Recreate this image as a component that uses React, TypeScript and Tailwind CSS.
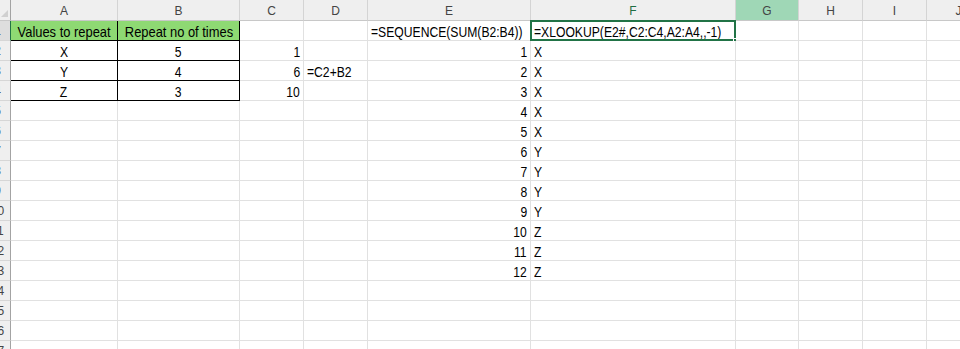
import React from "react";

type Align = "left" | "center" | "right";
type Cell = { text?: string; align?: Align; fill?: boolean; box?: boolean };

const columns = [
  { key: "A", width: "w-[107px]" },
  { key: "B", width: "w-[122px]" },
  { key: "C", width: "w-[64px]" },
  { key: "D", width: "w-[64px]" },
  { key: "E", width: "w-[163px]" },
  { key: "F", width: "w-[205px]" },
  { key: "G", width: "w-[63px]" },
  { key: "H", width: "w-[64px]" },
  { key: "I", width: "w-[64px]" },
  { key: "J", width: "w-[64px]" },
];

const font = "font-['Liberation_Sans',Arial,sans-serif]";

// sheet contents, keyed by row then column
const sheet: Record<number, Record<string, Cell>> = {
  1: {
    A: { text: "Values to repeat", align: "center", fill: true, box: true },
    B: { text: "Repeat no of times", align: "center", fill: true, box: true },
    E: { text: "=SEQUENCE(SUM(B2:B4))", align: "left" },
    F: { text: "=XLOOKUP(E2#,C2:C4,A2:A4,,-1)", align: "left" },
  },
  2: {
    A: { text: "X", align: "center", box: true },
    B: { text: "5", align: "center", box: true },
    C: { text: "1", align: "right" },
  },
  3: {
    A: { text: "Y", align: "center", box: true },
    B: { text: "4", align: "center", box: true },
    C: { text: "6", align: "right" },
    D: { text: "=C2+B2", align: "left" },
  },
  4: {
    A: { text: "Z", align: "center", box: true },
    B: { text: "3", align: "center", box: true },
    C: { text: "10", align: "right" },
  },
};

const spill = ["X", "X", "X", "X", "X", "Y", "Y", "Y", "Y", "Z", "Z", "Z"];
spill.forEach((letter, i) => {
  const row = i + 2;
  sheet[row] = sheet[row] || {};
  sheet[row].E = { text: String(i + 1), align: "right" };
  sheet[row].F = { text: letter, align: "left" };
});

const rows = Array.from({ length: 17 }, (_, i) => i + 1);

const alignClass = (align?: Align) =>
  align === "center"
    ? "justify-center"
    : align === "right"
      ? "justify-end pr-[3px]"
      : "justify-start pl-[3px]";

// no narrow font installed, so squeeze Liberation Sans to the width of Aptos Narrow
const squeezeClass = (cell: Cell) => {
  const origin =
    cell.align === "center" ? "origin-center" : cell.align === "right" ? "origin-right" : "origin-left";
  return `${origin} ${cell.fill ? "scale-x-[0.86]" : "scale-x-[0.81]"}`;
};

const ColumnHeader = ({ label, width }: { label: string; width: string }) => {
  const bg = label === "G" ? "bg-[#9fd7b6]" : "bg-[#efefef]";
  const color = label === "F" ? "text-[#1f6e43]" : "text-[#444444]";
  return (
    <div
      className={`${width} ${bg} ${color} shrink-0 h-[21px] flex justify-center pt-[1px] leading-[20px] text-[12px] border-r border-b border-r-[#d4d4d4] border-b-[#c8c8c8]`}
    >
      {label}
    </div>
  );
};

const RowHeader = ({ n }: { n: number }) => (
  <div
    className={`w-[11px] shrink-0 h-[20px] overflow-hidden border-b border-b-[#d6d6d6] border-r ${
      n === 1 ? "bg-[#dedede] border-r-[#217346]" : "bg-[#efefef] border-r-[#a3a3a3]"
    }`}
  >
    <div className="w-[25px] ml-[-15px] text-center text-[12px] leading-[20px] text-[#444444]">
      {n}
    </div>
  </div>
);

const SheetCell = ({ row, col, width }: { row: number; col: string; width: string }) => {
  const cell = sheet[row]?.[col];
  const border = cell?.box
    ? "border-r border-b border-black"
    : "border-r border-b border-[#e1e1e1]";
  const bg = cell?.fill ? "bg-[#8ed973]" : "bg-white";
  const selected = row === 1 && col === "F";
  return (
    <div
      className={`${width} ${border} ${bg} ${alignClass(cell?.align)} relative shrink-0 h-[20px] flex items-start pt-[3px] text-[15px] leading-[15px] text-black whitespace-nowrap`}
    >
      {cell?.text && (
        <span className={`inline-block shrink-0 ${squeezeClass(cell)}`}>{cell.text}</span>
      )}
      {selected && (
        <>
          <div className="absolute -left-[1px] -top-[1px] -right-[1px] -bottom-[1px] border-2 border-[#217346]" />
          <div className="absolute -right-[4px] -bottom-[4px] w-[6px] h-[6px] bg-[#217346] border border-white" />
        </>
      )}
    </div>
  );
};

export default function App() {
  return (
    <div className={`w-[960px] h-[349px] overflow-hidden bg-white ${font}`}>
      <div className="flex">
        <div className="w-[11px] shrink-0 h-[21px] bg-[#efefef] border-r border-b border-r-[#a3a3a3] border-b-[#c8c8c8] relative">
          <div className="absolute right-[2px] bottom-[3px] w-0 h-0 border-l-[7px] border-l-transparent border-b-[7px] border-b-[#d0d0d0]" />
        </div>
        {columns.map((c) => (
          <ColumnHeader key={c.key} label={c.key} width={c.width} />
        ))}
      </div>
      {rows.map((r) => (
        <div key={r} className="flex">
          <RowHeader n={r} />
          {columns.map((c) => (
            <SheetCell key={c.key} row={r} col={c.key} width={c.width} />
          ))}
        </div>
      ))}
    </div>
  );
}
